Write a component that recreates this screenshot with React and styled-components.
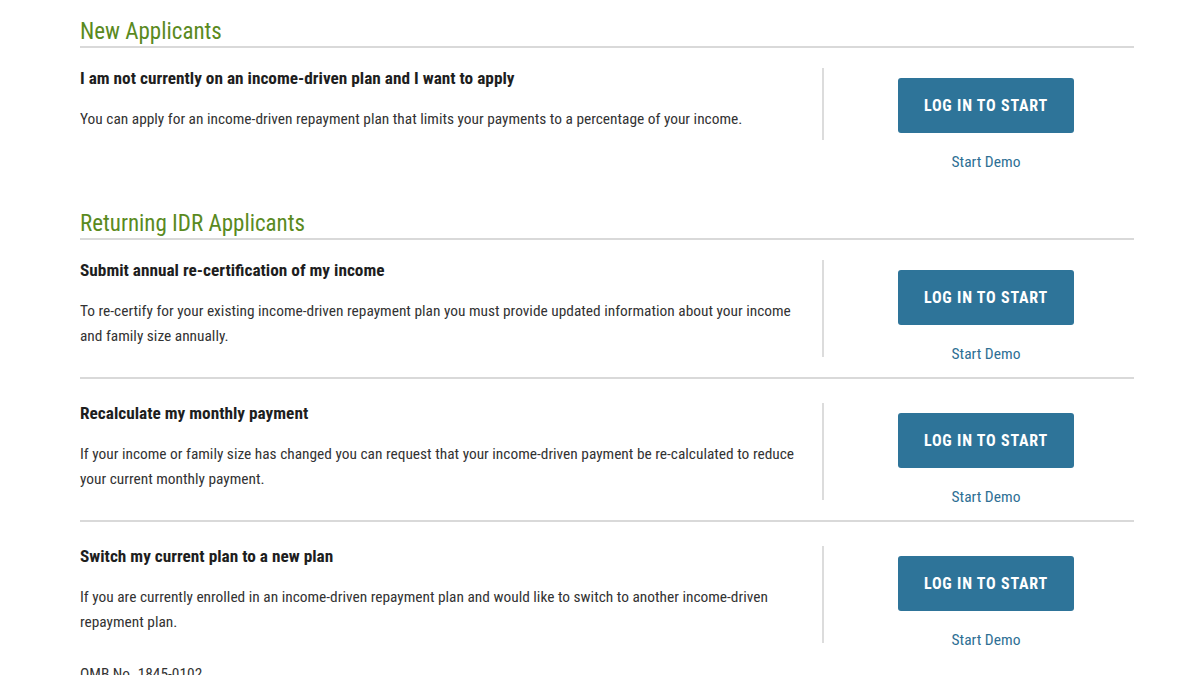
import React from 'react'
import styled, { createGlobalStyle } from 'styled-components'

const GlobalStyle = createGlobalStyle`
    body {
        margin: 0;
        background: #fff;
        font-family: "Roboto Condensed", "Liberation Sans Narrow", "DejaVu Sans Condensed", Roboto, sans-serif;
        color: #222;
    }
`

const Page = styled.div`
    width: 1054px;
    margin: 0 0 0 80px;
    padding-top: 18px;
`

const Section = styled.section`
    margin-bottom: 25px;

    &:last-of-type {
        margin-bottom: 0;
    }
`

const Heading = styled.h2`
    margin: 0;
    font-size: 23px;
    line-height: 28px;
    font-weight: 400;
    color: #5a8a1e;
    border-bottom: 2px solid #d9d9d9;
`

const Row = styled.div`
    display: flex;
    align-items: flex-start;
    padding: ${props => props.first ? '20px' : '24px'} 0 14px;
    border-top: ${props => props.first ? 'none' : '2px solid #d9d9d9'};
`

const Info = styled.div`
    width: 744px;
    box-sizing: border-box;
    padding-right: 16px;
    padding-bottom: 8px;
    border-right: 2px solid #dcdcdc;
`

const Title = styled.h3`
    margin: 0;
    font-size: 17.3px;
    line-height: 20px;
    font-weight: 700;
    color: #1e1e1e;
`

const Desc = styled.p`
    margin: 19px 0 0;
    font-size: 15.4px;
    line-height: 25px;
    color: #333;
`

const Actions = styled.div`
    flex: 1;
    display: flex;
    flex-direction: column;
    align-items: center;
    padding-left: 14px;
    padding-top: 10px;
`

const Button = styled.button`
    width: 176px;
    height: 55px;
    border: 0;
    border-radius: 3px;
    background: #2e7499;
    color: #fff;
    font-family: inherit;
    font-size: 16px;
    font-weight: 700;
    letter-spacing: 0.8px;
    cursor: pointer;
`

const Demo = styled.a`
    margin-top: 20px;
    font-size: 15.5px;
    line-height: 18px;
    color: #2e6f94;
    text-decoration: none;
`

const Omb = styled.div`
    margin-top: 2px;
    font-size: 15.4px;
    line-height: 18px;
    color: #333;
`

const newRows = [
    {
        title: 'I am not currently on an income-driven plan and I want to apply',
        desc: 'You can apply for an income-driven repayment plan that limits your payments to a percentage of your income.'
    }
]

const returningRows = [
    {
        title: 'Submit annual re-certification of my income',
        desc: 'To re-certify for your existing income-driven repayment plan you must provide updated information about your income and family size annually.'
    },
    {
        title: 'Recalculate my monthly payment',
        desc: 'If your income or family size has changed you can request that your income-driven payment be re-calculated to reduce your current monthly payment.'
    },
    {
        title: 'Switch my current plan to a new plan',
        desc: 'If you are currently enrolled in an income-driven repayment plan and would like to switch to another income-driven repayment plan.'
    }
]

function PlanRow({ title, desc, first }) {
    return (
        <Row first={first}>
            <Info>
                <Title>{title}</Title>
                <Desc>{desc}</Desc>
            </Info>
            <Actions>
                <Button>LOG IN TO START</Button>
                <Demo href="#">Start Demo</Demo>
            </Actions>
        </Row>
    )
}

export default function App() {
    return (
        <Page>
            <GlobalStyle />
            <Section>
                <Heading>New Applicants</Heading>
                {newRows.map((r, i) => <PlanRow key={i} {...r} first={i === 0} />)}
            </Section>
            <Section>
                <Heading>Returning IDR Applicants</Heading>
                {returningRows.map((r, i) => <PlanRow key={i} {...r} first={i === 0} />)}
            </Section>
            <Omb>OMB No. 1845-0102</Omb>
        </Page>
    )
}
